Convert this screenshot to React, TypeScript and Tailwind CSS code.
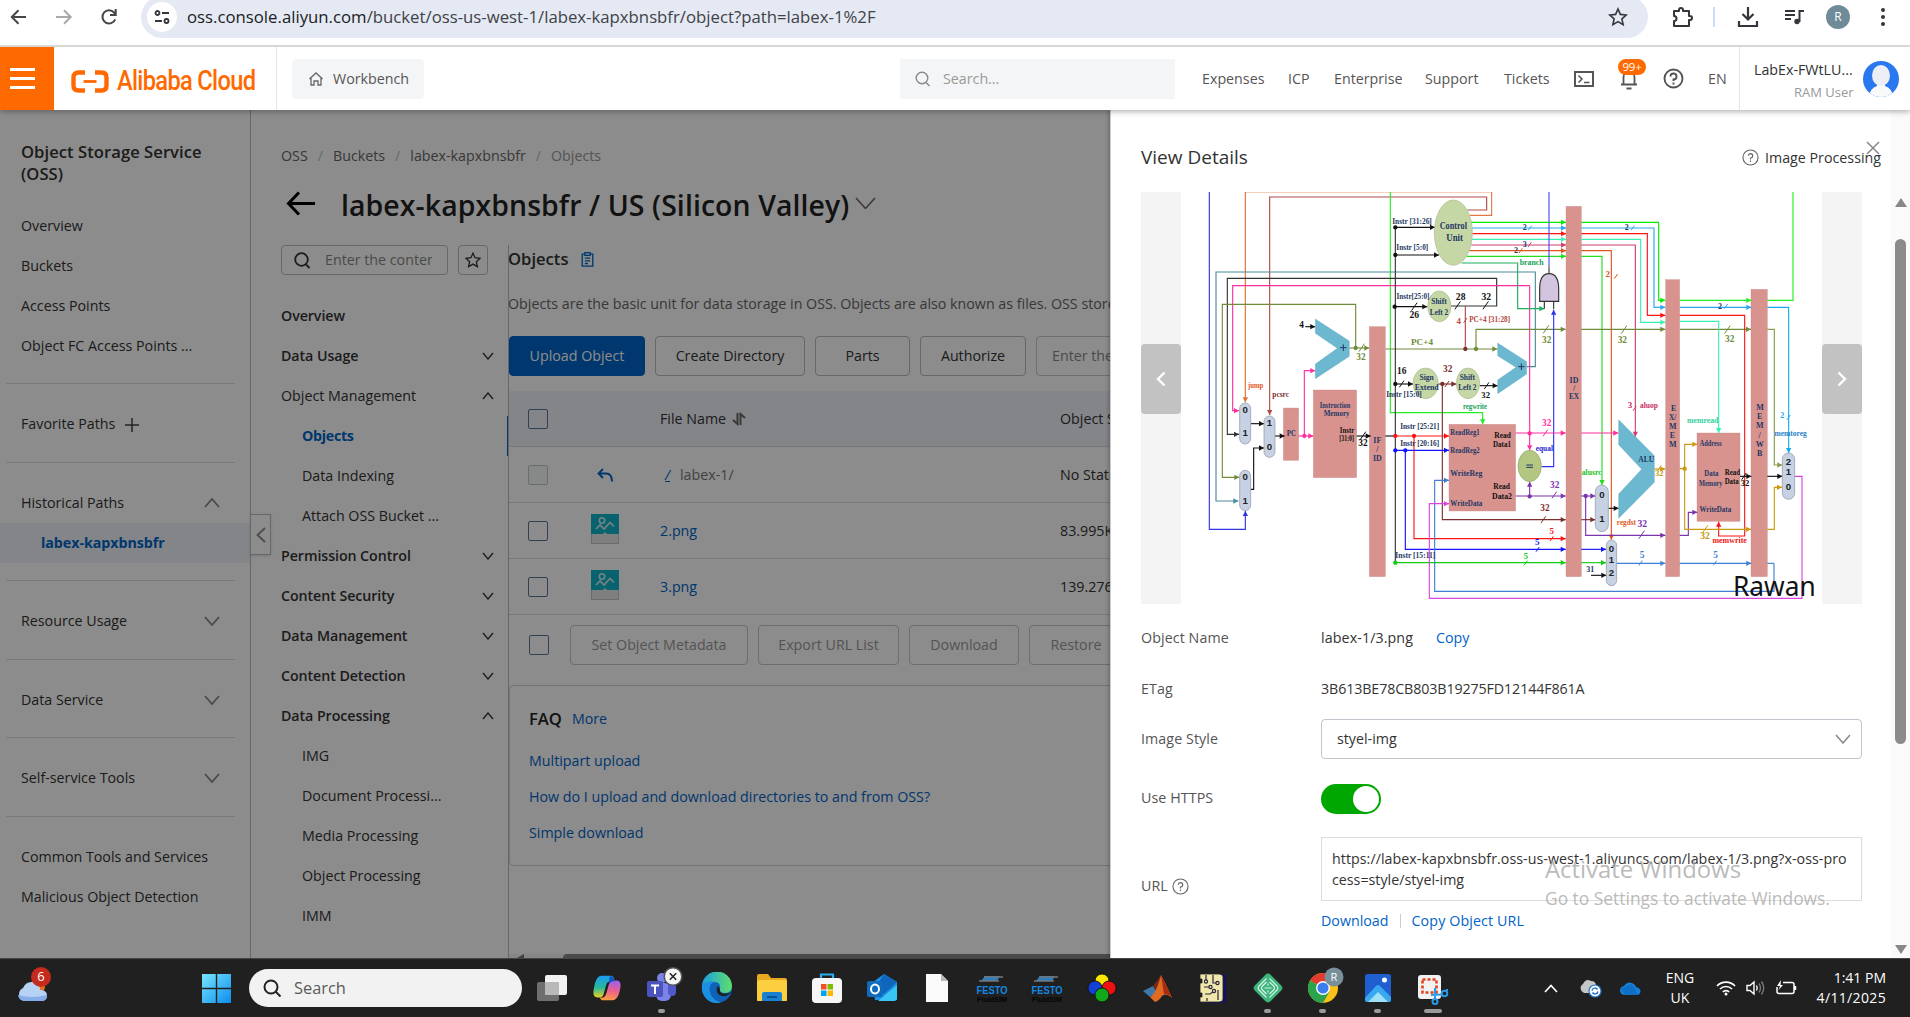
import React from "react";

type Pt = { children?: React.ReactNode; className?: string };

function Chevron({ up = false, size = 12, w = 1.4, className = "" }: { up?: boolean; size?: number; w?: number; className?: string }) {
  return (
    <svg width={size} height={size / 2 + 2} viewBox={`0 0 ${size} ${size / 2 + 2}`} fill="none" stroke="currentColor" strokeWidth={w} className={className}>
      {up ? <path d={`M1 ${size / 2 + 1} L${size / 2} 1 L${size - 1} ${size / 2 + 1}`} /> : <path d={`M1 1 L${size / 2} ${size / 2 + 1} L${size - 1} 1`} />}
    </svg>
  );
}

/* ---------- Browser toolbar ---------- */

function BrowserBar() {
  return (
    <div className="flex h-[47px] shrink-0 items-start border-b-[2px] border-[#e0e0e0] bg-white text-[#3c4043]">
      <div className="flex h-[34px] w-[141px] items-center pl-[9px]">
        <svg width="20" height="20" viewBox="0 0 20 20" fill="none" stroke="#44474a" strokeWidth="2"><path d="M17 10H3M9.500 3.300L2.800 10L9.500 16.700" /></svg>
        <svg className="ml-[25px]" width="20" height="20" viewBox="0 0 20 20" fill="none" stroke="#a8a9ab" strokeWidth="2"><path d="M2 10H16M10 3.300L16.700 10L10 16.700" /></svg>
        <svg className="ml-[25px]" width="20" height="20" viewBox="0 0 20 20" fill="none" stroke="#44474a" strokeWidth="2"><path d="M16.200 12.300A6.600 6.600 0 1 1 15 5.500L16.500 7.500M16.700 2V8H11" /></svg>
      </div>
      <div className="-mt-1 flex h-[42px] w-[1507px] items-center rounded-full bg-[#e4e9f3] pl-[6px]">
        <div className="flex size-[30px] items-center justify-center rounded-full bg-white">
          <svg width="18" height="18" viewBox="0 0 18 18" fill="none" stroke="#33363a" strokeWidth="1.800"><circle cx="4.500" cy="5" r="2" /><path d="M9 5H16M2 13H9" /><circle cx="13.500" cy="13" r="2" /></svg>
        </div>
        <span className="ml-[10px] text-[16.750px] whitespace-nowrap text-[#3f4246]"><span className="text-[#1b1c1e]">oss.console.aliyun.com</span>/bucket/oss-us-west-1/labex-kapxbnsbfr/object?path=labex-1%2F</span>
        <svg className="mr-[20px] ml-auto" width="20" height="20" viewBox="0 0 20 20" fill="none" stroke="#33363a" strokeWidth="1.600"><path d="M10 2L12.400 7.400L18.200 8L13.900 11.900L15.100 17.600L10 14.600L4.900 17.600L6.100 11.900L1.800 8L7.600 7.400Z" /></svg>
      </div>
      <div className="flex h-[34px] flex-1 items-center pl-[23px]">
        <svg width="23" height="23" viewBox="0 0 23 23" fill="none" stroke="#33363a" strokeWidth="2"><path d="M3 5H8V4A2 2 0 0 1 12 4V5H18V10H19A2 2 0 0 1 19 14H18V20H3V15A2.500 2.500 0 0 0 3 10Z" strokeLinejoin="round" /></svg>
        <div className="ml-[19px] h-5 w-[2px] bg-[#c9dcf8]" />
        <svg className="ml-[22px]" width="22" height="22" viewBox="0 0 22 22" fill="none" stroke="#33363a" strokeWidth="2.200"><path d="M11 1V13M5.500 8L11 13.500L16.500 8M2 15V20H20V15" /></svg>
        <svg className="ml-[25px]" width="21" height="18" viewBox="0 0 21 18" fill="none" stroke="#33363a" strokeWidth="2"><path d="M1 3H11M1 7H11M1 11H7M15.500 14V3H20" /><circle cx="13" cy="13.500" r="2.700" fill="#33363a" stroke="none" /></svg>
        <div className="ml-[21px] flex size-6 items-center justify-center rounded-full bg-[#6f8b98] text-[12px] text-white">R</div>
        <svg className="ml-[30px]" width="6" height="20" viewBox="0 0 6 20" fill="#33363a"><circle cx="3" cy="3" r="2" /><circle cx="3" cy="10" r="2" /><circle cx="3" cy="17" r="2" /></svg>
      </div>
    </div>
  );
}

/* ---------- Console header ---------- */

function ConsoleHeader() {
  return (
    <header className="relative z-30 flex h-[63px] shrink-0 items-center bg-white text-[14.250px] text-[#555] shadow-[0_2px_5px_rgba(0,0,0,0.28)]">
      <div className="flex h-full w-[54px] flex-col justify-center gap-[6px] bg-[#ff6a00] pl-[10px]">
        <i className="block h-[3px] w-[25px] bg-white" />
        <i className="block h-[3px] w-[25px] bg-white" />
        <i className="block h-[3px] w-[25px] bg-white" />
      </div>
      <div className="flex h-full w-[223px] items-center border-r border-[#e3e4e6] pl-[17px]">
        <svg width="38" height="23" viewBox="0 0 38 23" fill="none" stroke="#ff6a00" className="mt-[5px] shrink-0">
          <path d="M14 2.500H7.500Q2.500 2.500 2.500 7.500V15.500Q2.500 20.500 7.500 20.500H14M24 2.500H30.500Q35.500 2.500 35.500 7.500V15.500Q35.500 20.500 30.500 20.500H24" strokeWidth="4.400" />
          <path d="M12.500 11.500H25.500" strokeWidth="2.800" />
        </svg>
        <span className="mt-[4px] ml-[8px] origin-left scale-x-[0.845] font-['Roboto'] text-[28px] leading-none font-medium tracking-[-0.800px] whitespace-nowrap text-[#ff6a00]">Alibaba Cloud</span>
      </div>
      <div className="ml-[15px] flex h-10 w-[132px] shrink-0 items-center rounded-sm bg-[#f4f5f6] pl-[17px]">
        <svg width="14" height="14" viewBox="0 0 14 14" fill="none" stroke="#666" strokeWidth="1.300"><path d="M0.500 7L7 1L13.500 7M2 6V13H5V9H9V13H12V6" /></svg>
        <span className="ml-[10px]">Workbench</span>
      </div>
      <div className="ml-[476px] flex h-10 w-[275px] items-center bg-[#f4f5f6] pl-[15px] text-[#999]">
        <svg width="16" height="16" viewBox="0 0 16 16" fill="none" stroke="#888" strokeWidth="1.400"><circle cx="7" cy="7" r="5.800" /><path d="M11 11.500L14.500 15" /></svg>
        <span className="ml-[12px]">Search...</span>
      </div>
      <div className="flex items-center pl-[27px] whitespace-nowrap">
        <span className="w-[86px]">Expenses</span>
        <span className="w-[46px]">ICP</span>
        <span className="w-[91px]">Enterprise</span>
        <span className="w-[79px]">Support</span>
        <span className="w-[70px]">Tickets</span>
      </div>
      <svg width="20" height="16" viewBox="0 0 20 16" fill="none" stroke="#555" strokeWidth="2"><path d="M1 1H19V15H1Z" /><path d="M4.500 4.500L8 8L4.500 11.500M10 11.500H15.500" strokeWidth="1.500" /></svg>
      <div className="relative ml-[26px] h-[22px] w-[18px]">
        <svg width="18" height="22" viewBox="0 0 18 22" fill="none" stroke="#555" strokeWidth="1.800"><path d="M1 16.500H17M3.500 16V9A5.500 6 0 0 1 14.500 9V16M6.500 20.500H11.500" /></svg>
        <span className="absolute top-[-9px] left-[-2px] flex h-4 w-7 items-center justify-center rounded-full bg-[#ff6a00] text-[11.500px] tracking-[-0.300px] text-white">99+</span>
      </div>
      <svg className="ml-[25px]" width="21" height="21" viewBox="0 0 21 21" fill="none" stroke="#555" strokeWidth="1.900"><circle cx="10.500" cy="10.500" r="9" /><path d="M7.500 8.500A3 3 0 1 1 10.500 11.500V13M10.500 14.500V16.500" /></svg>
      <span className="ml-[24px]">EN</span>
      <div className="ml-[12px] h-full w-px bg-[#e3e4e6]" />
      <div className="flex w-[114px] flex-col items-end pt-1 leading-[23px]">
        <span className="pr-[1px] whitespace-nowrap text-[#333]">LabEx-FWtLU...</span>
        <span className="text-[13px] text-[#999]">RAM User</span>
      </div>
      <svg className="ml-[9px]" width="36" height="36" viewBox="0 0 36 36">
        <defs><clipPath id="av"><circle cx="18" cy="18" r="18" /></clipPath></defs>
        <g clipPath="url(#av)"><rect width="36" height="36" fill="#2a78f0" /><path d="M14 20H22V25Q29 27 30 36H6Q7 27 14 25Z" fill="#f8f9fb" /><ellipse cx="18" cy="14.500" rx="9" ry="10.500" fill="#eceff5" /></g>
      </svg>
    </header>
  );
}

/* ---------- Left sidebar ---------- */

function SideRow({ children, className = "" }: Pt) {
  return <div className={`flex h-10 items-center pr-[30px] pl-[21px] ${className}`}>{children}</div>;
}
function Rule({ className = "" }: Pt) {
  return <div className={`mr-[15px] ml-[6px] h-px shrink-0 bg-[#dcdcdc] ${className}`} />;
}

function Sidebar() {
  return (
    <aside className="relative flex w-[251px] shrink-0 flex-col border-r border-[#b9bcc2] pt-[31px] text-[#333]">
      <h2 className="w-[220px] pl-[21px] text-[16.600px] leading-[22px] font-semibold tracking-[0.050px]">Object Storage Service (OSS)</h2>
      <div className="mt-[21px]">
        {["Overview", "Buckets", "Access Points", "Object FC Access Points ..."].map((t) => (
          <SideRow key={t}>{t}</SideRow>
        ))}
      </div>
      <Rule className="mt-[17px] mb-5" />
      <SideRow>
        Favorite Paths
        <svg className="mt-0.5 ml-[10px]" width="14" height="14" viewBox="0 0 14 14" stroke="#444" strokeWidth="1.500"><path d="M7 0V14M0 7H14" /></svg>
      </SideRow>
      <Rule className="mt-[18px] mb-5" />
      <SideRow>Historical Paths<Chevron up size={16} className="ml-auto text-[#888]" w={1.800} /></SideRow>
      <div className="flex h-10 items-center bg-[#eff3f8] pl-[41px] font-bold tracking-[-0.050px] text-[#0064c8]">labex-kapxbnsbfr</div>
      <Rule className="mt-[17px] mb-5" />
      <SideRow>Resource Usage<Chevron size={16} className="ml-auto text-[#888]" w={1.800} /></SideRow>
      <Rule className="mt-[18px] mb-5" />
      <SideRow>Data Service<Chevron size={16} className="ml-auto text-[#888]" w={1.800} /></SideRow>
      <Rule className="mt-[17px] mb-5" />
      <SideRow>Self-service Tools<Chevron size={16} className="ml-auto text-[#888]" w={1.800} /></SideRow>
      <Rule className="mt-[18px] mb-5" />
      <SideRow>Common Tools and Services</SideRow>
      <SideRow>Malicious Object Detection</SideRow>
      <div className="absolute top-[404px] left-[250px] z-10 flex h-[41px] w-[21px] items-center justify-center border border-[#b9bcc2] bg-white shadow">
        <svg width="10" height="16" viewBox="0 0 10 16" fill="none" stroke="#888" strokeWidth="1.800"><path d="M9 1L1.500 8L9 15" /></svg>
      </div>
    </aside>
  );
}

/* ---------- Bucket navigation ---------- */

const nav: { t: string; kind: "top" | "open" | "sub" | "active"; arrow?: "up" | "down" }[] = [
  { t: "Overview", kind: "top" },
  { t: "Data Usage", kind: "top", arrow: "down" },
  { t: "Object Management", kind: "open", arrow: "up" },
  { t: "Objects", kind: "active" },
  { t: "Data Indexing", kind: "sub" },
  { t: "Attach OSS Bucket ...", kind: "sub" },
  { t: "Permission Control", kind: "top", arrow: "down" },
  { t: "Content Security", kind: "top", arrow: "down" },
  { t: "Data Management", kind: "top", arrow: "down" },
  { t: "Content Detection", kind: "top", arrow: "down" },
  { t: "Data Processing", kind: "top", arrow: "up" },
  { t: "IMG", kind: "sub" },
  { t: "Document Processi...", kind: "sub" },
  { t: "Media Processing", kind: "sub" },
  { t: "Object Processing", kind: "sub" },
  { t: "IMM", kind: "sub" },
];

const navKind = {
  top: "font-semibold tracking-[-0.080px]",
  open: "",
  sub: "pl-[21px]",
  active: "pl-[21px] font-bold tracking-[-0.300px] text-[#0064c8] border-r-[1.500px] border-[#0064c8]",
};

function BucketNav() {
  return (
    <nav className="w-[227px] shrink-0 text-[#333]">
      <div className="flex h-[30px] gap-[10px]">
        <div className="flex w-[167px] items-center overflow-hidden rounded-sm border border-[#b9bcc2] pl-[12px]">
          <svg className="shrink-0" width="17" height="17" viewBox="0 0 17 17" fill="none" stroke="#333" strokeWidth="1.800"><circle cx="7.500" cy="7.500" r="6.300" /><path d="M12 12.500L15.500 16" /></svg>
          <span className="ml-[14px] w-[107px] overflow-hidden whitespace-nowrap text-[#888]">Enter the content</span>
        </div>
        <div className="flex w-[30px] items-center justify-center rounded-sm border border-[#b9bcc2]">
          <svg width="16" height="16" viewBox="0 0 20 20" fill="none" stroke="#333" strokeWidth="1.600"><path d="M10 1.500L12.600 7.200L18.800 7.900L14.200 12.100L15.500 18.300L10 15.100L4.500 18.300L5.800 12.100L1.200 7.900L7.400 7.200Z" /></svg>
        </div>
      </div>
      <div className="mt-[21px]">
        {nav.map((n) => (
          <div key={n.t} className={`flex h-10 items-center ${navKind[n.kind]}`}>
            {n.t}
            {n.arrow && <Chevron up={n.arrow === "up"} size={12} w={1.300} className="mr-[14px] ml-auto" />}
          </div>
        ))}
      </div>
    </nav>
  );
}

/* ---------- Object list ---------- */

function Check({ off = false, className = "" }: { off?: boolean; className?: string }) {
  return <span className={`block size-5 shrink-0 rounded-[2px] border-[1.500px] ${off ? "border-[#c3c5c6] bg-[#f6f7f8]" : "border-[#5c7696]"} ${className}`} />;
}
function Btn({ children, className = "" }: Pt) {
  return <div className={`flex h-10 shrink-0 items-center justify-center rounded-sm border whitespace-nowrap ${className}`}>{children}</div>;
}
function PngIcon() {
  return (
    <svg className="mb-1" width="28" height="30" viewBox="0 0 28 30">
      <rect x="0.500" y="0.500" width="27" height="29" fill="#e8e8e8" stroke="#c4c4c4" />
      <path d="M0 0H28V20H16L14 18L12 20H0Z" fill="#12b5c9" />
      <g fill="none" stroke="#d8eef2" strokeWidth="1.600"><circle cx="11" cy="6.500" r="2.700" /><path d="M5 15L9 11L13 15L19 8.500L23 12.500" /></g>
    </svg>
  );
}
function Row({ check, icon, name, size, head = false }: { check: React.ReactNode; icon?: React.ReactNode; name: React.ReactNode; size: string; head?: boolean }) {
  return (
    <div className={`grid h-14 grid-cols-[62px_70px_400px_200px] items-center border-b border-[#d9dbde] pl-[19px] ${head ? "bg-[#eff2fa]" : ""}`}>
      {check}
      <div className="-ml-[7px] flex w-[44px] justify-center">{icon}</div>
      <div className="flex items-center">{name}</div>
      <div className="whitespace-nowrap text-[#333]">{size}</div>
    </div>
  );
}

function ObjectList() {
  return (
    <section className="w-[800px] shrink-0 border-l border-[#b9bcc2] text-[#333]">
      <div className="flex h-[28px] items-center">
        <h3 className="-ml-px text-[16.600px] font-semibold">Objects</h3>
        <svg className="ml-[13px]" width="13" height="15" viewBox="0 0 14 17" fill="none" stroke="#0064c8" strokeWidth="1.500"><path d="M1 2.500H13V16H1Z" /><rect x="4" y="0.800" width="6" height="3" fill="#fff" /><path d="M4 7H10M4 10H10M4 13H7.500" /></svg>
      </div>
      <p className="-ml-px mt-[20px] h-[22px] leading-[22px] whitespace-nowrap text-[#666]">Objects are the basic unit for data storage in OSS. Objects are also known as files. OSS stores objects in</p>
      <div className="mt-[21px] flex gap-[10px]">
        <Btn className="w-[136px] border-[#0064c8] bg-[#0064c8] text-white">Upload Object</Btn>
        <Btn className="w-[150px] border-[#b9bcc2]">Create Directory</Btn>
        <Btn className="w-[95px] border-[#b9bcc2]">Parts</Btn>
        <Btn className="w-[106px] border-[#b9bcc2]">Authorize</Btn>
        <Btn className="w-[220px] justify-start border-[#c9cbce] pl-[15px] text-[#888]">Enter the prefix</Btn>
      </div>
      <div className="mt-[15px]">
        <Row
          head
          check={<Check />}
          name={<>File Name<svg className="ml-[6px]" width="14" height="14" viewBox="0 0 14 14" fill="#666" stroke="#666" strokeWidth="2"><path d="M5.500 1V12L1 8M8.500 13V2L13 6" fill="none" /></svg></>}
          size="Object Size"
        />
        <Row
          check={<Check off />}
          icon={<svg width="16" height="14" viewBox="0 0 16 14" fill="none" stroke="#0064c8" strokeWidth="1.900"><path d="M6 1L1.500 5.500L6 10M1.500 5.500H9Q15 5.500 15 13.500" /></svg>}
          name={<><span className="ml-[5px] text-[#0064c8] italic underline">/</span><span className="ml-[10px] text-[#777]">labex-1/</span></>}
          size="No Statistics"
        />
        <Row check={<Check />} icon={<PngIcon />} name={<span className="text-[#0064c8]">2.png</span>} size="83.995KB" />
        <Row check={<Check />} icon={<PngIcon />} name={<span className="text-[#0064c8]">3.png</span>} size="139.276KB" />
      </div>
      <div className="flex items-center gap-[10px] pt-[10px] pl-5 text-[#999]">
        <Check className="mr-[11px]" />
        <Btn className="w-[178px] border-[#c4c6ca]">Set Object Metadata</Btn>
        <Btn className="w-[141px] border-[#c4c6ca]">Export URL List</Btn>
        <Btn className="w-[110px] border-[#c4c6ca]">Download</Btn>
        <Btn className="w-[94px] border-[#c4c6ca]">Restore</Btn>
      </div>
      <div className="mt-[20px] h-[181px] rounded border border-[#d2d3d6] pl-[19px] text-[#0064c8]">
        <div className="flex items-center gap-[10px] pt-[21px]"><b className="text-[16.600px] leading-6 font-semibold text-[#222]">FAQ</b>More</div>
        <div className="mt-[12px] leading-9"><p>Multipart upload</p><p>How do I upload and download directories to and from OSS?</p><p>Simple download</p></div>
      </div>
      <div className="mt-[88px] flex h-1 items-end bg-[#f5f5f5]">
        <svg width="16" height="4" viewBox="0 0 16 4"><path d="M8 4L15 0V4Z" fill="#777" /></svg>
        <div className="ml-[38px] h-1 w-[600px] rounded-tl bg-[#888]" />
      </div>
    </section>
  );
}

function Workspace() {
  return (
    <main className="w-[859px] shrink-0 overflow-hidden pl-[30px]">
      <div className="mt-[36px] flex h-5 items-center gap-[10px] text-[#666]">
        <span>OSS</span><span className="text-[#bbb]">/</span><span>Buckets</span><span className="text-[#bbb]">/</span><span>labex-kapxbnsbfr</span><span className="text-[#bbb]">/</span><span className="text-[#999]">Objects</span>
      </div>
      <div className="mt-[17px] flex h-11 items-center text-[#222]">
        <svg className="-mt-[2px] ml-[5px]" width="30" height="26" viewBox="0 0 30 26" fill="none" stroke="#000" strokeWidth="3"><path d="M29 12.500H3M13 1.500L2.500 12.500L13 23.500" /></svg>
        <h1 className="ml-[25px] text-[28.400px] font-semibold tracking-[0.100px] whitespace-nowrap">labex-kapxbnsbfr / US (Silicon Valley)</h1>
        <Chevron size={21} w={1.500} className="-mt-[4px] ml-[6px] text-[#666]" />
      </div>
      <div className="mt-[18px] flex">
        <BucketNav />
        <ObjectList />
      </div>
    </main>
  );
}

/* ---------- Pipeline datapath drawing ---------- */

const OL = "#6f8c3a", PK = "#ff2fa0", TL = "#4b8a9b", BR = "#b04a48", DB = "#7b2e2e", PU = "#7a35ad", YE = "#c99a12", LB = "#3f7fd6", MG = "#dd44dd", NV = "#1f3864";

const wires: [string, string, boolean?][] = [
  ["#3232e6", "238,21 238,1033 346,1033 346,978", true],
  ["#f0a070", "1085,21 346,21"],
  ["#e07840", "1020,91 1085,91 1085,21"],
  ["#e07030", "346,21 346,652", true],
  [BR, "1012,75 1070,75 1070,36 419,36 419,690", true],
  ["#22ee22", "781,21 781,683 1058,683 1058,718", true],
  [TL, "1190,545 1216,545 1216,261 258,261 258,948 325,948", true],
  ["#333", "963,363 1100,363 1100,280 292,280 292,748 327,748", true],
  [PK, "1199,302 308,302 308,677 327,677", true],
  [PK, "1199,302 1199,796", true],
  [OL, "677,489 677,358 277,358 277,877 328,877", true],
  [OL, "658,489 718,489", true],
  ["#111", "526,425 556,425", true],
  [PK, "523,753 523,557 556,557", true],
  [OL, "766,492 1102,492", true],
  [OL, "1038,492 1038,433 1307,433", true],
  [BR, "1006,363 1006,492"],
  ["#333", "796,127 796,1133"],
  ["#111", "796,127 915,127", true],
  ["#111", "796,210 927,210", true],
  ["#111", "796,365 892,365", true],
  ["#111", "796,597 849,597", true],
  ["#00ee00", "1020,112 1308,112", true],
  ["#2aa8f0", "1025,129 1308,129", true],
  ["#ff1414", "1027,146 1308,146", true],
  ["#3af0b0", "1026,163 1308,163", true],
  ["#d04070", "1024,180 1308,180", true],
  ["#e0561a", "1018,197 1308,197", true],
  ["#22dd22", "1010,214 1308,214", true],
  ["#1fae60", "995,234 1163,234 1163,371 1243,371", true],
  ["#4a4aee", "1257,21 1257,247"],
  ["#333", "1257,247 1257,265"],
  ["#333", "1243,349 1243,371"],
  ["#333", "1271,349 1271,372"],
  ["#3030ee", "1235,845 1271,845 1271,374", true],
  ["#00ee00", "1354,112 1586,112 1586,346 1606,346", true],
  ["#2aa8f0", "1354,129 1572,129 1572,367 1606,367", true],
  ["#ff1414", "1354,146 1552,146 1552,391 1606,391", true],
  ["#3af0b0", "1354,163 1532,163 1532,412 1606,412", true],
  ["#d04070", "1354,180 1516,180 1516,755", true],
  ["#e0561a", "1354,197 1444,197 1444,1064", true],
  ["#22dd22", "1354,214 1416,214 1416,900", true],
  [OL, "1354,433 1606,433", true],
  [OL, "1650,433 1863,433", true],
  ["#8a9a50", "1912,433 1933,433 1933,840 1957,840", true],
  ["#22ee22", "1649,346 1864,346", true],
  ["#22ee22", "1912,346 1989,346 1989,21"],
  ["#2aa8f0", "1649,367 1864,367", true],
  ["#14aaf0", "1912,367 1976,367 1976,804", true],
  ["#ff1414", "1649,391 1844,391 1844,1053 1766,1053 1766,1010", true],
  ["#3af0b0", "1649,409 1766,409 1766,744", true],
  [DB, "925,597 979,597", true],
  [DB, "937,597 937,1004 1307,1004", true],
  ["#111", "1049,602 1103,602", true],
  ["#111", "362,716 402,716", true],
  ["#111", "435,753 464,753", true],
  ["#111", "362,913 371,913 371,789 402,789", true],
  [PK, "506,753 550,753", true],
  ["#111", "680,753 722,753", true],
  ["#111", "766,753 796,753"],
  ["#ff1414", "796,753 957,753", true],
  ["#ff1414", "852,753 852,1061 1307,1061", true],
  ["#1414ff", "796,796 957,796", true],
  ["#1414ff", "826,796 826,1093 1307,1093", true],
  ["#10cc10", "796,1133 1307,1133", true],
  [LB, "1932,1135 1932,1219 914,1219 914,886 957,886", true],
  [MG, "1994,874 2016,874 2016,1240 898,1240 898,956 957,956", true],
  [PK, "1157,744 1307,744", true],
  [PK, "1354,744 1465,744", true],
  [PU, "1157,933 1307,933", true],
  [PU, "1199,933 1199,890", true],
  [PU, "1354,933 1396,933", true],
  [PU, "1367,933 1367,1051 1606,1051", true],
  [PU, "1649,1051 1675,1051 1675,982 1702,982", true],
  [DB, "1354,1004 1396,1004", true],
  ["#111", "1435,970 1466,970", true],
  [YE, "1573,852 1606,852", true],
  [YE, "1649,851 1664,851 1664,778 1702,778", true],
  [YE, "1664,851 1664,1033 1863,1033", true],
  [YE, "1912,1033 1933,1033 1933,907 1956,907", true],
  ["#1414ff", "1354,1093 1428,1093", true],
  ["#10cc10", "1354,1133 1428,1133", true],
  ["#111", "1383,1171 1429,1171", true],
  [LB, "1460,1135 1606,1135", true],
  [LB, "1649,1135 1864,1135", true],
  [LB, "1912,1135 1932,1135"],
  ["#111", "1830,874 1864,874", true],
  ["#111", "1912,874 1957,874", true],
];

const slashes: [number, number, string, number?][] = [
  [695, 488, OL], [853, 365, "#111"], [983, 361, "#111"], [1067, 361, "#111"], [1006, 406, BR, 7], [815, 597, "#111", 10], [951, 597, DB, 9], [1070, 602, "#111", 10],
  [1248, 433, OL], [1482, 434, OL], [1792, 434, OL], [1200, 129, "#2aa8f0", 7], [1508, 129, "#2aa8f0", 7], [1788, 364, "#2aa8f0", 7], [1199, 179, "#d04070", 7], [1172, 197, "#e0561a", 7],
  [1458, 274, "#e0561a", 7], [1246, 744, PK, 10], [1273, 930, PU, 10], [1240, 1004, DB, 10], [1265, 1061, "#ff1414", 7], [1223, 1093, "#1414ff", 7], [1187, 1134, "#10cc10", 7],
  [1514, 670, "#d04070", 7], [1535, 1049, PU], [1532, 1134, LB, 7], [1755, 1134, LB, 7], [1725, 1033, YE], [1976, 697, "#14aaf0", 7], [1588, 849, YE, 8], [699, 752, "#111"], [1842, 874, "#111", 10],
];

const dots: [number, number, string][] = [
  [677, 489, OL], [1006, 492, DB], [1038, 492, OL], [796, 127, "#111"], [796, 210, "#111"], [794, 365, "#111"], [796, 597, "#111"], [937, 597, DB], [523, 753, PK],
  [796, 753, "#ff1414"], [852, 753, "#ff1414"], [796, 796, "#1414ff"], [826, 796, "#1414ff"], [796, 1133, "#10cc10"], [1199, 745, PK], [1199, 934, PU], [1367, 933, PU], [1664, 851, YE],
];

/* x centre, y centre, text, colour, size, drawn width */
const labels: [number, number, string, string, number, number?][] = [
  [970, 124, "Control", NV, 28, 82], [974, 160, "Unit", NV, 28, 50],
  [846, 108, "Instr [31:26]", NV, 25, 119], [847, 188, "Instr [5:0]", NV, 25, 96], [849, 333, "Instr[25:0]", NV, 25, 99], [822, 629, "Instr [15:0]", NV, 25, 107],
  [927, 348, "Shift", NV, 25, 46], [927, 382, "Left 2", NV, 25, 55], [890, 578, "Sign", NV, 25, 43], [890, 607, "Extend", NV, 25, 72], [1012, 577, "Shift", NV, 25, 46], [1012, 607, "Left 2", NV, 25, 55],
  [853, 390, "26", "#111", 29], [992, 334, "28", "#111", 29], [1069, 334, "32", "#111", 29], [515, 420, "4", "#111", 28], [815, 557, "16", "#111", 28], [953, 551, "32", DB, 28], [1067, 630, "32", "#111", 26],
  [986, 409, "4", "#c04a40", 27], [1079, 402, "PC+4 [31:28]", "#b5443c", 25, 123], [876, 470, "PC+4", OL, 27, 66], [693, 515, "32", OL, 28],
  [377, 602, "jump", "#e0561a", 25, 46], [452, 627, "pcsrc", DB, 25, 50], [484, 746, "PC", NV, 24, 28],
  [615, 660, "Instruction", NV, 25, 91], [620, 686, "Memory", NV, 25, 78], [651, 735, "Instr", "#111", 24, 43], [650, 761, "[31:0]", "#111", 23, 44], [699, 773, "32", "#111", 28],
  [742, 767, "IF", NV, 24], [742, 794, "/", NV, 24], [742, 820, "ID", NV, 24],
  [1035, 665, "regwrite", "#17a05a", 25, 72], [869, 723, "Instr [25:21]", NV, 25, 117], [869, 774, "Instr [20:16]", NV, 25, 117], [856, 1111, "Instr [15:11]", NV, 25, 120],
  [1005, 741, "ReadReg1", NV, 25, 88], [1005, 795, "ReadReg2", NV, 25, 88], [1009, 866, "WriteReg", NV, 25, 97], [1009, 956, "WriteData", NV, 25, 96],
  [1118, 749, "Read", "#111", 26, 50], [1116, 778, "Data1", "#111", 26, 54], [1115, 903, "Read", "#111", 26, 50], [1116, 932, "Data2", "#111", 26, 60],
  [1205, 232, "branch", "#17a05a", 25, 72], [1250, 466, "32", OL, 28], [1477, 466, "32", OL, 28], [1799, 462, "32", OL, 28],
  [1184, 128, "2", NV, 24], [1184, 179, "3", NV, 24], [1158, 195, "2", NV, 24], [1490, 128, "2", NV, 24], [1770, 363, "2", NV, 24], [1433, 266, "2", "#e0561a", 27],
  [1332, 586, "ID", NV, 24], [1332, 611, "/", NV, 24], [1332, 635, "EX", NV, 22],
  [1250, 713, "32", PK, 28], [1243, 790, "equal", "#1f1fd0", 25, 52], [1274, 899, "32", PU, 28], [1245, 970, "32", DB, 28], [1265, 1038, "5", "#ff1414", 27], [1222, 1072, "5", "#1414ff", 27], [1187, 1113, "5", "#10cc10", 27],
  [1385, 863, "alusrc", "#22c022", 25, 60], [1500, 661, "3", "#c83060", 27], [1557, 661, "aluop", "#c83060", 25, 54], [1549, 824, "ALU", NV, 25, 48], [1588, 864, "32", YE, 26], [1489, 1013, "regdst", "#e0561a", 25, 57],
  [1537, 1017, "32", PU, 29], [1536, 1111, "5", LB, 28], [1757, 1111, "5", LB, 28], [1381, 1152, "31", NV, 24],
  [1631, 670, "E", NV, 24], [1628, 697, "X/", NV, 24, 22], [1628, 724, "M", NV, 24], [1627, 750, "E", NV, 24], [1628, 777, "M", NV, 24],
  [1890, 668, "M", NV, 24], [1889, 695, "E", NV, 24], [1889, 722, "M", NV, 24], [1889, 750, "/", NV, 24], [1889, 777, "W", NV, 24], [1889, 804, "B", NV, 24],
  [1718, 705, "memread", "#30d0a0", 25, 94], [1742, 774, "Address", NV, 25, 66], [1744, 864, "Data", NV, 25, 42], [1742, 896, "Memory", NV, 25, 70], [1807, 863, "Read", "#111", 25, 46], [1805, 889, "Data", "#111", 25, 42],
  [1756, 972, "WriteData", NV, 25, 95], [1845, 895, "32", "#111", 26], [1725, 1053, "32", YE, 29], [1799, 1066, "memwrite", "#ee1111", 25, 103], [1982, 745, "memtoreg", "#2a80c8", 25, 97], [1957, 692, "2", "#14aaf0", 24],
];

const muxes: [number, number, number, number, [string, number][]][] = [
  [329, 654, 33, 123, [["0", 674], ["1", 742]]],
  [402, 693, 33, 124, [["1", 713], ["0", 786]]],
  [329, 856, 33, 121, [["0", 874], ["1", 947]]],
  [1396, 900, 39, 140, [["0", 928], ["1", 1000]]],
  [1429, 1065, 31, 137, [["0", 1090], ["1", 1124], ["2", 1163]]],
  [1957, 804, 37, 139, [["2", 830], ["1", 860], ["0", 904]]],
];

const blocks = [
  [718, 425, 48, 750], [460, 669, 46, 157], [550, 615, 130, 263], [957, 718, 200, 260], [1308, 64, 46, 1111], [1607, 284, 42, 891], [1863, 313, 49, 862], [1701, 744, 129, 265],
];

function Wire({ c, pts, arrow }: { c: string; pts: string; arrow?: boolean }) {
  const p = pts.split(" ").map((s) => s.split(",").map(Number));
  const [ex, ey] = p[p.length - 1];
  const [px, py] = p[p.length - 2];
  const dx = Math.sign(ex - px), dy = Math.sign(ey - py);
  const bx = ex - dx * 15, by = ey - dy * 15;
  return (
    <g>
      <polyline points={pts} fill="none" stroke={c} strokeWidth="3.400" />
      {arrow && <polygon fill={c} points={`${ex},${ey} ${bx + dy * 8},${by + dx * 8} ${bx - dy * 8},${by - dx * 8}`} />}
    </g>
  );
}

function Datapath() {
  return (
    <svg width="641" height="412" viewBox="153 21 1923 1236" className="block">
      {wires.slice(0, 17).map(([c, p, a], i) => <Wire key={i} c={c} pts={p} arrow={a} />)}
      <g fill="#d9938f" stroke="#c88480" strokeWidth="1">
        {blocks.map(([x, y, w, h]) => <rect key={x} x={x} y={y} width={w} height={h} />)}
      </g>
      {wires.slice(17).map(([c, p, a], i) => <Wire key={i} c={c} pts={p} arrow={a} />)}
      {slashes.map(([x, y, c, r = 12], i) => <path key={i} d={`M${x - r * 0.7} ${y + r}L${x + r * 0.7} ${y - r}`} stroke={c} strokeWidth="3" />)}
      <g fill="#6cb8d0" stroke="#5aa0b8" strokeWidth="1">
        <polygon points="556,402 658,468 658,514 556,581 556,537 622,490 556,445" />
        <polygon points="1103,474 1190,530 1190,567 1103,626 1103,585 1158,547 1103,512" />
        <polygon points="1466,704 1573,812 1573,892 1466,1000 1466,927 1535,853 1466,779" />
      </g>
      <g stroke={NV} strokeWidth="3"><path d="M630 488H650M640 478V498M1164 545H1184M1174 535V555" /></g>
      <g fill="#c5d7a4" stroke="#a9b98c" strokeWidth="2">
        <ellipse cx="970" cy="143" rx="57" ry="98" />
        <ellipse cx="928" cy="364" rx="35" ry="46" />
        <ellipse cx="887" cy="595" rx="38" ry="46" />
        <ellipse cx="1014" cy="595" rx="35" ry="46" />
        <ellipse cx="1199" cy="843" rx="35" ry="47" fill="#b3c782" stroke="#8fa363" />
      </g>
      <path d="M1189 840H1209M1189 847H1209" stroke={NV} strokeWidth="3" />
      <path d="M1229 349V312Q1229 266 1257 266Q1286 266 1286 312V349Z" fill="#d3c5e0" stroke="#333" strokeWidth="3.500" />
      {dots.map(([x, y, c], i) => <circle key={i} cx={x} cy={y} r="6.500" fill={c} />)}
      {muxes.map(([x, y, w, h, t], i) => (
        <g key={i}>
          <rect x={x} y={y} width={w} height={h} rx={w / 2} fill="#c6d2e4" stroke="#8a92a0" strokeWidth="2" />
          {t.map(([s, ty]) => <text key={s} x={x + w / 2} y={ty + 10} textAnchor="middle" fontFamily="Liberation Sans, sans-serif" fontWeight="700" fontSize="29" fill="#222">{s}</text>)}
        </g>
      ))}
      {labels.map(([x, y, t, c, s, w], i) => (
        <text key={i} x={x} y={y + s * 0.33} textAnchor="middle" fontFamily="Liberation Serif, serif" fontWeight="700" fontSize={s} fill={c} textLength={w} lengthAdjust="spacingAndGlyphs">{t}</text>
      ))}
      <text x="1809" y="1232" fontFamily="Noto Sans, sans-serif" fontSize="80" fill="#111" textLength="248" lengthAdjust="spacingAndGlyphs">Rawan</text>
    </svg>
  );
}

/* ---------- Details drawer ---------- */

function PreviewStrip({ next = false }: { next?: boolean }) {
  return (
    <div className="flex w-10 flex-col bg-[#f4f4f4] pt-[152px]">
      <div className="flex h-[70px] items-center justify-center rounded-sm bg-[#c2c2c2]">
        <svg width="10" height="16" viewBox="0 0 10 16" fill="none" stroke="#fff" strokeWidth="2.400"><path d={next ? "M1.500 1.500L8 8L1.500 14.500" : "M8.500 1.500L2 8L8.500 14.500"} /></svg>
      </div>
    </div>
  );
}

function Field({ label, className = "", children }: Pt & { label: React.ReactNode }) {
  return (
    <div className={`flex items-center ${className}`}>
      <div className="flex w-[180px] shrink-0 items-center font-[450] tracking-[0.080px] text-[#555]">{label}</div>
      {children}
    </div>
  );
}

function Help({ className = "" }: Pt) {
  return <svg className={className} width="17" height="17" viewBox="0 0 18 18" fill="none" stroke="#666" strokeWidth="1.200"><circle cx="9" cy="9" r="8" /><path d="M6.700 7.200A2.300 2.300 0 1 1 9 9.500V11M9 12.300V13.800" /></svg>;
}

function Drawer() {
  return (
    <div className="absolute top-0 right-0 z-20 flex h-full w-[800px] border-l border-[#ccc] bg-white text-[#333] shadow-[-2px_0_3px_rgba(0,0,0,0.2)]">
      <div className="w-[780px] pl-[30px]">
        <div className="relative flex h-[82px] items-center pt-[13px]">
          <h2 className="text-[19px]">View Details</h2>
          <div className="ml-auto flex items-center gap-[6px] pr-[10px] whitespace-nowrap"><Help />Image Processing</div>
          <svg className="absolute top-[31px] right-[11px]" width="14" height="14" viewBox="0 0 14 14" stroke="#888" strokeWidth="1.500"><path d="M1 1L13 13M13 1L1 13" /></svg>
        </div>
        <div className="flex h-[412px] w-[721px]">
          <PreviewStrip />
          <Datapath />
          <PreviewStrip next />
        </div>
        <Field label="Object Name" className="mt-[14px] h-10"><span className="tracking-[0.100px]">labex-1/3.png</span><span className="ml-[23px] text-[#0064c8]">Copy</span></Field>
        <Field label="ETag" className="mt-[11px] h-10"><span className="tracking-[-0.110px]">3B613BE78CB803B19275FD12144F861A</span></Field>
        <Field label="Image Style" className="mt-[10px] h-10">
          <div className="flex h-10 w-[541px] items-center rounded-sm border border-[#c0c6cc] pr-[10px] pl-[15px]">styel-img<Chevron size={16} className="ml-auto text-[#888]" w={1.500} /></div>
        </Field>
        <Field label={<span className="-mt-[2px]">Use HTTPS</span>} className="mt-[25px] h-[30px]">
          <div className="flex h-[30px] w-[60px] items-center justify-end rounded-full bg-[#00a700] pr-[2px]"><i className="block size-[26px] rounded-full bg-white" /></div>
        </Field>
        <Field label={<>URL<Help className="ml-[4px]" /></>} className="mt-[23px]">
          <div className="w-[541px]">
            <div className="h-[64px] border border-[#dcdcdc] px-[10px] pt-[10px] leading-[21px]">
              <p className="tracking-[0.040px] whitespace-nowrap">https://labex-kapxbnsbfr.oss-us-west-1.aliyuncs.com/labex-1/3.png?x-oss-pro</p>
              <p>cess=style/styel-img</p>
            </div>
            <div className="mt-[8px] mb-[2px] flex h-[24px] items-center text-[#0064c8]">Download<i className="mx-[11px] block h-[14px] w-px bg-[#ccc]" /><span className="tracking-[0.120px]">Copy Object URL</span></div>
          </div>
        </Field>
      </div>
      <div className="flex flex-1 flex-col items-center bg-[#fafafa] pt-[88px] pb-1">
        <svg width="12" height="9" viewBox="0 0 12 9"><path d="M6 0L12 9H0Z" fill="#888" /></svg>
        <div className="mt-8 h-[505px] w-[11px] rounded-full bg-[#8b8b8b]" />
        <svg className="mt-auto" width="12" height="9" viewBox="0 0 12 9"><path d="M6 9L12 0H0Z" fill="#888" /></svg>
      </div>
      <div className="pointer-events-none absolute top-[743px] left-[434px] whitespace-nowrap text-[#a8a8a8]/80">
        <p className="text-[23.900px] leading-8">Activate Windows</p>
        <p className="mt-[1px] text-[17.400px] leading-6">Go to Settings to activate Windows.</p>
      </div>
    </div>
  );
}

/* ---------- Taskbar ---------- */

function Festo() {
  return (
    <svg width="32" height="32" viewBox="0 0 32 32">
      <path d="M5 9L9 4H24L21 9Z" fill="#2b7fc4" /><path d="M8 5H27M3 9H23" stroke="#777" strokeWidth="1.500" />
      <text x="16" y="22" textAnchor="middle" fontFamily="Liberation Sans, sans-serif" fontWeight="700" fontSize="10" fill="#1488e0" textLength="31" lengthAdjust="spacingAndGlyphs">FESTO</text>
      <text x="16" y="30" textAnchor="middle" fontFamily="Liberation Sans, sans-serif" fontWeight="700" fontSize="8" fill="#050505" textLength="30" lengthAdjust="spacingAndGlyphs">FluidSIM</text>
    </svg>
  );
}

const apps: { key: string; el: React.ReactNode; mark?: "dot" | "bar" }[] = [
  { key: "views", el: <svg width="32" height="32" viewBox="0 0 32 32"><rect x="9" y="3" width="22" height="20" rx="2" fill="#f2f2f2" /><rect x="1" y="10" width="22" height="19" rx="2" fill="#6f6f6f" /><rect x="9" y="10" width="14" height="13" fill="#b9b9b9" /></svg> },
  {
    key: "copilot",
    el: (
      <svg width="30" height="30" viewBox="0 0 32 32">
        <defs>
          <linearGradient id="cp1" x1="0" y1="0" x2="0" y2="1"><stop offset="0" stopColor="#1a9cf0" /><stop offset=".55" stopColor="#28b89a" /><stop offset="1" stopColor="#f0d020" /></linearGradient>
          <linearGradient id="cp2" x1="0.500" y1="0" x2="0.300" y2="1"><stop offset="0" stopColor="#a060e8" /><stop offset=".5" stopColor="#f0608a" /><stop offset="1" stopColor="#f8a040" /></linearGradient>
        </defs>
        <path d="M10 3H20Q23 3 23.500 6L24 9H19Q16 9 15 13L12.500 22Q11.500 26 8 26H6Q1 26 1.500 20Q3 8 6 5Q7.500 3 10 3Z" fill="url(#cp1)" />
        <path d="M22 29H12Q9 29 8.500 26H12Q14.500 25 15.500 21L18 12Q19 8 22 8H26Q31 8 30.500 14Q29 24 26 27Q24.500 29 22 29Z" fill="url(#cp2)" />
        <path d="M19 3.500Q22.500 3 23.500 7L24 9Q20 8 18 12Z" fill="#1450c0" />
      </svg>
    ),
  },
  {
    key: "teams",
    mark: "dot",
    el: (
      <svg width="40" height="40" viewBox="0 0 40 40" className="overflow-visible">
        <circle cx="20" cy="10" r="5" fill="#7b83eb" /><rect x="14" y="15" width="15" height="18" rx="6" fill="#7b83eb" /><rect x="26" y="15" width="8" height="13" rx="4" fill="#5059c9" />
        <rect x="5" y="13" width="16" height="16" rx="2" fill="#4b53bc" /><path d="M9 17.500H17M13 17.500V26" stroke="#fff" strokeWidth="2" />
        <circle cx="31" cy="8.500" r="8.800" fill="#f5f5f5" stroke="#555" strokeWidth="1.500" /><path d="M27.800 5.300L34.200 11.700M34.200 5.300L27.800 11.700" stroke="#222" strokeWidth="1.500" />
      </svg>
    ),
  },
  {
    key: "edge",
    el: (
      <svg width="32" height="32" viewBox="0 0 32 32">
        <defs><linearGradient id="eg" x1="0" y1="0" x2="1" y2="0"><stop offset="0" stopColor="#1b9de2" /><stop offset="1" stopColor="#5fe06a" /></linearGradient></defs>
        <circle cx="16" cy="16" r="15" fill="#0f62b8" />
        <path d="M1 15A15 15 0 0 1 31 14Q31 21 24 21Q18 21 19 17Q20 10 13 10Q5 9 1 15Z" fill="url(#eg)" />
        <path d="M1 14Q6 8 13 10Q7 13 9 20Q11 28 20 30.500A15 15 0 0 1 1 14Z" fill="#1b8fe0" />
        <path d="M19 17Q18 21 23 21.500Q27 22 30 20Q27 25 21 24Q14 22 16 15Q17 13 19 17Z" fill="#202020" />
      </svg>
    ),
  },
  { key: "explorer", el: <svg width="32" height="32" viewBox="0 0 32 32"><path d="M1 4Q1 2 3 2H12L15 6H29Q31 6 31 8V29H1Z" fill="#e8a820" /><rect x="1" y="8" width="30" height="21" rx="2" fill="#fcce40" /><path d="M6 29V22Q6 20 8 20H24Q26 20 26 22V29Z" fill="#1a80d0" /><path d="M11 25H21" stroke="#0a4f90" strokeWidth="2" /></svg> },
  { key: "store", el: <svg width="32" height="32" viewBox="0 0 32 32"><path d="M10 8V2.500H22V8" fill="none" stroke="#2ab0ec" strokeWidth="2.200" /><rect x="1" y="6" width="30" height="25" rx="4" fill="#f6f6f6" /><path d="M10 12H15.500V17.500H10Z" fill="#f25022" /><path d="M16.500 12H22V17.500H16.500Z" fill="#7fba00" /><path d="M10 18.500H15.500V24H10Z" fill="#00a4ef" /><path d="M16.500 18.500H22V24H16.500Z" fill="#ffb900" /></svg> },
  { key: "outlook", el: <svg width="32" height="32" viewBox="0 0 32 32"><path d="M7 10L18 2L31 10V28H9Z" fill="#1f8ee6" /><path d="M18 2L31 10L18 22L9 16Z" fill="#1066bc" /><path d="M31 13V26Q31 29 28 29H12Z" fill="#38c6f4" /><rect x="1" y="9" width="16" height="16" rx="2" fill="#0f6cbd" /><ellipse cx="9" cy="17" rx="4" ry="4.500" fill="none" stroke="#fff" strokeWidth="2" /></svg> },
  { key: "file", el: <svg width="24" height="30" viewBox="0 0 24 30"><path d="M1 1H16L23 8V29H1Z" fill="#fafafa" /><path d="M16 1V8H23Z" fill="#b8b8b8" /></svg> },
  { key: "festo1", el: <Festo /> },
  { key: "festo2", el: <Festo /> },
  { key: "flower", el: <svg width="30" height="32" viewBox="0 0 32 32" stroke="#111"><circle cx="16" cy="8.500" r="7.500" fill="#ffe800" /><circle cx="8.500" cy="16" r="7.500" fill="#1440d8" /><circle cx="23.500" cy="16" r="7.500" fill="#f01010" /><circle cx="16" cy="23.500" r="7.500" fill="#10a818" /></svg> },
  { key: "matlab", el: <svg width="32" height="32" viewBox="0 0 32 32"><path d="M1 19L11 14L15 20L8 25Z" fill="#3d78a8" /><path d="M11 14Q16 8 19 3L15 20Z" fill="#7a2a18" /><path d="M19 3Q24 12 30 26Q24 20 20 24Q17 29 13 30L8 25Q14 22 19 3Z" fill="#e06a20" /><path d="M19 3Q24 12 30 26Q25 21 22 22Z" fill="#a82c14" /></svg> },
  {
    key: "circuit",
    el: (
      <svg width="32" height="32" viewBox="0 0 32 32">
        <rect x="8" y="2" width="21" height="29" rx="3" fill="#14106a" />
        <path d="M3 2H22Q26 2 26 5V27Q26 30 22 30H3V25H5V21H3V11H5V7H3Z" fill="#f0e8aa" stroke="#222" strokeWidth="0.800" />
        <g fill="none" stroke="#2a2440" strokeWidth="1.200"><path d="M9 3V8M16 3V11H19M7 15H12M21 18V28M8 22H13L16 20M10 29V26" /><circle cx="9" cy="9.500" r="1.600" /><circle cx="20.500" cy="11" r="1.600" /><circle cx="13.500" cy="15" r="1.600" /><circle cx="17" cy="19" r="1.600" /></g>
      </svg>
    ),
  },
  { key: "diamond", mark: "dot", el: <svg width="32" height="32" viewBox="0 0 32 32"><rect x="4.800" y="4.800" width="22.400" height="22.400" rx="4" transform="rotate(45 16 16)" fill="#3db57c" /><g fill="none" stroke="#d8f5e6" strokeWidth="1.200"><path d="M14.500 6.500L7 14Q5.500 16 7 18L14.500 25.500M17.500 6.500L25 14Q26.500 16 25 18L17.500 25.500M14.500 10L10 14.500Q9 16 10 17.500L14.500 22M17.500 10L22 14.500Q23 16 22 17.500L17.500 22" /><path d="M12.500 16H19.500M16 11.500V13.500M16 18.500V20.500" /></g></svg> },
  {
    key: "chrome",
    mark: "dot",
    el: (
      <svg width="40" height="40" viewBox="0 0 40 40" className="overflow-visible">
        <circle cx="20" cy="20" r="15" fill="#fbc116" /><path d="M20 20L7 12.500A15 15 0 0 1 33 12.500Z" fill="#e33b2e" /><path d="M20 20L7 12.500A15 15 0 0 0 20 35L26.500 23.500Z" fill="#2ba24c" />
        <circle cx="20" cy="20" r="7" fill="#fff" /><circle cx="20" cy="20" r="5.600" fill="#3b7ded" />
        <circle cx="31" cy="9" r="9.500" fill="#78909c" /><text x="31" y="13" textAnchor="middle" fontFamily="Open Sans, sans-serif" fontSize="11" fill="#fff">R</text>
      </svg>
    ),
  },
  { key: "photos", mark: "dot", el: <svg width="28" height="28" viewBox="0 0 28 28"><rect x="1" y="0" width="26" height="28" rx="2.500" fill="#1f5fcf" /><path d="M1 24L12 12Q14 10 16 12L27 23V26Q27 28 25 28H3Q1 28 1 26Z" fill="#3aa8f0" /><path d="M4 28L14 18L24 28Z" fill="#9fe0fa" /><circle cx="20.500" cy="6" r="2.500" fill="#fff" /></svg> },
  { key: "snip", mark: "bar", el: <svg width="34" height="34" viewBox="0 0 34 34"><rect x="2" y="4" width="23" height="24" rx="3" fill="#f2f2f2" /><rect x="6.500" y="8.500" width="14" height="13" fill="none" stroke="#e0411e" strokeWidth="2.600" strokeDasharray="3 2" /><g fill="none" stroke="#2a9be8" strokeWidth="2"><circle cx="28.500" cy="22.500" r="2.800" /><circle cx="19" cy="30.500" r="2.500" /><path d="M31 18V20M26 23.500L15 24M19 28V17" /></g></svg> },
];

function Taskbar() {
  return (
    <footer className="flex h-[59px] shrink-0 items-center border-t border-[#454545] bg-[#202020] text-[14px] text-white">
      <div className="relative ml-[16px] h-[20px] w-[32px]">
        <svg width="32" height="34" viewBox="0 0 32 34" className="absolute -top-[5px] left-0"><circle cx="24" cy="14" r="5" fill="#e8701c" /><path d="M8 28A7 7 0 0 1 7 15Q10 8 17 9Q24 10 24 17Q31 17 31 22.500Q31 28 25 28Z" fill="#b8d2f6" /><path d="M8 28A7 7 0 0 1 2 22Q16 26 31 22Q31 28 25 28Z" fill="#86aeea" /></svg>
        <span className="absolute -top-[11px] left-[15px] flex size-5 items-center justify-center rounded-full bg-[#c42b1c] text-[13px]">6</span>
      </div>
      <svg className="ml-[154px]" width="29" height="29" viewBox="0 0 29 29">
        <defs><linearGradient id="win" x1="0" y1="0" x2="1" y2="1"><stop offset="0" stopColor="#7ae6fc" /><stop offset="1" stopColor="#0a8cee" /></linearGradient></defs>
        <path d="M0 0H13.800V13.800H0ZM15.200 0H29V13.800H15.200ZM0 15.200H13.800V29H0ZM15.200 15.200H29V29H15.200Z" fill="url(#win)" />
      </svg>
      <div className="ml-[18px] flex h-[38px] w-[273px] items-center rounded-full bg-[#f2f2f2] pl-[14px] text-[#5a5a5a]">
        <svg width="19" height="19" viewBox="0 0 19 19" fill="none" stroke="#222" strokeWidth="2"><circle cx="8" cy="8" r="6.500" /><path d="M12.500 12.500L17.500 17.500" /></svg>
        <span className="ml-[12px] text-[16.400px]">Search</span>
      </div>
      <div className="ml-[2px] flex">
        {apps.map((a) => (
          <div key={a.key} className="relative flex h-[58px] w-[55.100px] items-center justify-center">
            {a.el}
            {a.mark && <i className={`absolute bottom-[4px] h-1 rounded-full bg-[#9a9a9a] ${a.mark === "bar" ? "w-[18px]" : "w-[7px]"}`} />}
          </div>
        ))}
      </div>
      <div className="ml-auto flex items-center pr-[24px]">
        <svg width="14" height="9" viewBox="0 0 14 9" fill="none" stroke="#fff" strokeWidth="1.700"><path d="M1 8L7 1.500L13 8" /></svg>
        <svg className="ml-[21px]" width="24" height="20" viewBox="0 0 24 20"><path d="M5 15A5 5 0 0 1 4 6Q7 0 12 3Q17 3 17 8Q21 9 21 12Q20 15 17 15Z" fill="#c6c6c6" /><circle cx="16" cy="13" r="6" fill="#fff" stroke="#2273c4" strokeWidth="1.200" /><path d="M13 12.500A3 3 0 0 1 18.500 11.500M19 13.500A3 3 0 0 1 13.500 14.500" stroke="#2273c4" strokeWidth="1.500" fill="none" /></svg>
        <svg className="ml-[17px]" width="21" height="15" viewBox="0 0 21 15"><path d="M5 14A4.500 4.500 0 0 1 4 5Q7 0 12 2Q15 3 16 6Q20.500 7 20.500 10.500Q20 14 16.500 14Z" fill="#1480dc" /><path d="M1 8L12 3L18 14H5Z" fill="#0a5cb0" opacity=".5" /></svg>
        <div className="ml-[23px] w-[32px] text-center leading-5">ENG<br />UK</div>
        <svg className="ml-[20px]" width="20" height="16" viewBox="0 0 20 16" fill="none" stroke="#fff" strokeWidth="1.700"><path d="M1 6A12.500 12.500 0 0 1 19 6M4 9A8.500 8.500 0 0 1 16 9M6.800 12A4.500 4.500 0 0 1 13.200 12" /><circle cx="10" cy="14" r="1.500" fill="#fff" stroke="none" /></svg>
        <svg className="ml-[10px]" width="20" height="16" viewBox="0 0 20 16" fill="none" stroke="#fff" strokeWidth="1.400"><path d="M1 5.500H4L8 2V14L4 10.500H1ZM10.500 5.500Q12 8 10.500 10.500" /><path d="M13 3.500Q16 8 13 12.500M15.500 1.500Q20 8 15.500 14.500" stroke="#777" /></svg>
        <svg className="ml-[9px]" width="22" height="16" viewBox="0 0 22 16" fill="none" stroke="#fff" strokeWidth="1.500"><path d="M8 2.500H17Q19 2.500 19 4.500V11.500Q19 13.500 17 13.500H4Q2 13.500 2 11.500V7M20.500 6V10" /><path d="M6 0L2 6H5L3.500 10L8 5H5.500Z" fill="#fff" stroke="none" /></svg>
        <div className="ml-[19px] w-[70px] text-right leading-5 whitespace-nowrap">1:41 PM<br /><span className="tracking-[0.350px]">4/11/2025</span></div>
      </div>
    </footer>
  );
}

export default function App() {
  return (
    <div className="flex h-[1017px] w-[1910px] flex-col overflow-hidden bg-white font-['Open_Sans','Noto_Sans',sans-serif] text-[14.250px]">
      <BrowserBar />
      <ConsoleHeader />
      <div className="relative flex h-[848px] shrink-0 overflow-hidden bg-white">
        <Sidebar />
        <Workspace />
        <div className="absolute inset-0 z-10 bg-black/45" />
        <Drawer />
      </div>
      <Taskbar />
    </div>
  );
}
